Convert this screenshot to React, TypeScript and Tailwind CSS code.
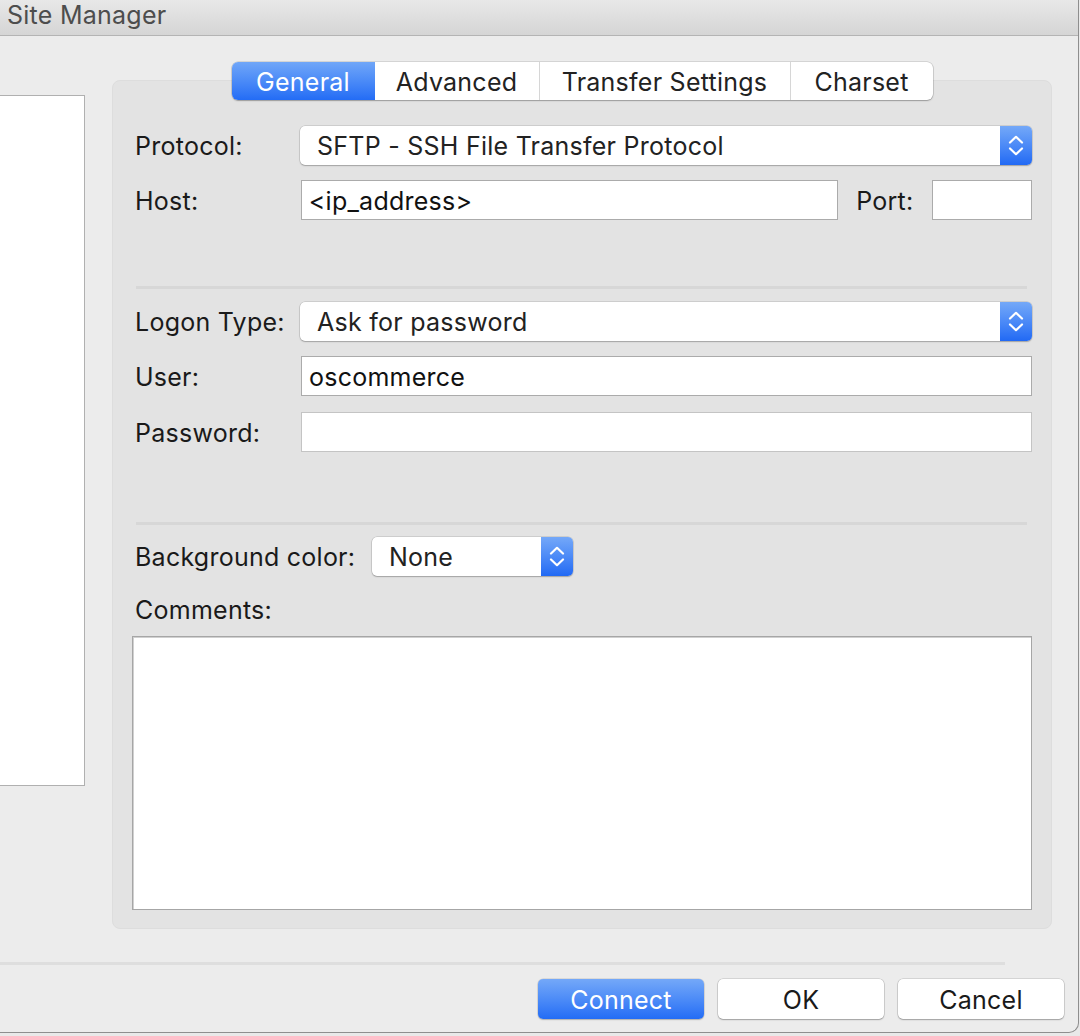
import React from "react";

const font = { fontFamily: '"Inter", "Liberation Sans", sans-serif' };

function Stepper() {
  return (
    <div className="flex h-full w-[32px] flex-col items-center justify-center gap-[3px] rounded-r-[5px] bg-gradient-to-b from-[#74a8f8] to-[#2169f4]">
      <svg width="16" height="9" viewBox="0 0 16 9" fill="none">
        <path d="M2 7.5 L8 1.8 L14 7.5" stroke="white" strokeWidth="2.2" strokeLinecap="round" strokeLinejoin="round" />
      </svg>
      <svg width="16" height="9" viewBox="0 0 16 9" fill="none">
        <path d="M2 1.5 L8 7.2 L14 1.5" stroke="white" strokeWidth="2.2" strokeLinecap="round" strokeLinejoin="round" />
      </svg>
    </div>
  );
}

function Select({ value, className }: { value: string; className: string }) {
  return (
    <div
      className={
        "flex h-[39px] items-stretch rounded-[5px] bg-white shadow-[0_0_0_0.5px_rgba(0,0,0,0.18),0_1px_1.5px_rgba(0,0,0,0.22)] " +
        className
      }
    >
      <div className="flex flex-1 items-center pl-[17px] pt-[2px] text-[25px] leading-none text-[#222]">{value}</div>
      <Stepper />
    </div>
  );
}

function Input({ value, className }: { value?: string; className: string }) {
  return (
    <div className={"flex h-[40px] items-center border border-[#ababab] bg-white pl-[7px] pt-[2px] text-[25px] leading-none text-[#111] " + className}>
      {value}
    </div>
  );
}

function Label({ children, className }: { children: React.ReactNode; className?: string }) {
  return <span className={"pt-[2px] text-[25px] leading-none text-[#1a1a1a] " + (className ?? "")}>{children}</span>;
}

function Sep() {
  return <div className="h-[3px] bg-[#d7d7d7] ml-[23px] mr-[24px]" />;
}

export default function App() {
  return (
    <div className="relative h-[1036px] w-[1080px] overflow-hidden bg-[#e9e9e9] tracking-[0.25px]" style={font}>
      <div className="flex h-[1033px] w-[1079px] flex-col overflow-hidden rounded-br-[10px] border-b border-r border-[#8e8e8e] bg-[#ececec]">
        {/* Title bar */}
        <div className="flex h-[36px] shrink-0 items-start border-b border-[#b4b4b4] bg-gradient-to-b from-[#e8e8e8] to-[#d5d5d5] pl-[7px]">
          <span className="mt-[-1px] text-[25px] leading-[32px] text-[#4d4d4d]">Site Manager</span>
        </div>

        {/* Body */}
        <div className="flex flex-1">
          {/* Left list */}
          <div className="mt-[59px] h-[691px] w-[85px] shrink-0 border border-l-0 border-[#b0b0b0] bg-white" />

          {/* Tab group */}
          <div className="ml-[27px] mt-[26px] flex w-[940px] flex-col">
            <div className="relative z-10 flex h-[38px] self-center rounded-[6px] bg-white text-[25px] leading-none text-[#222] shadow-[0_0_0_0.5px_rgba(0,0,0,0.2),0_1px_1.5px_rgba(0,0,0,0.25)]">
              <div className="flex w-[143px] items-center justify-center rounded-l-[6px] bg-gradient-to-b from-[#70a6f8] to-[#236cf5] pt-[2px] text-white">
                General
              </div>
              <div className="flex w-[165px] items-center justify-center border-r border-[#d6d6d6] pt-[2px]">Advanced</div>
              <div className="flex w-[251px] items-center justify-center border-r border-[#d6d6d6] pt-[2px]">Transfer Settings</div>
              <div className="flex w-[142px] items-center justify-center pt-[2px]">Charset</div>
            </div>

            <div className="mt-[-20px] flex h-[849px] flex-col rounded-[8px] border border-[#dddddd] bg-[#e3e3e3] pt-[45px]">
              {/* Protocol */}
              <div className="flex h-[39px] items-center pl-[22px] pr-[19px]">
                <Label className="w-[165px]">Protocol:</Label>
                <Select value="SFTP - SSH File Transfer Protocol" className="flex-1" />
              </div>
              {/* Host */}
              <div className="mt-[15px] flex h-[40px] items-center pl-[22px] pr-[19px]">
                <Label className="w-[166px]">Host:</Label>
                <Input value="<ip_address>" className="w-[538px]" />
                <Label className="ml-[18px] w-[76px]">Port:</Label>
                <Input className="w-[100px]" />
              </div>

              <div className="mt-[66px]">
                <Sep />
              </div>

              {/* Logon Type */}
              <div className="mt-[13px] flex h-[39px] items-center pl-[22px] pr-[19px]">
                <Label className="w-[165px]">Logon Type:</Label>
                <Select value="Ask for password" className="flex-1" />
              </div>
              <div className="mt-[15px] flex h-[40px] items-center pl-[22px] pr-[19px]">
                <Label className="w-[166px]">User:</Label>
                <Input value="oscommerce" className="flex-1" />
              </div>
              <div className="mt-[16px] flex h-[40px] items-center pl-[22px] pr-[19px]">
                <Label className="w-[166px]">Password:</Label>
                <Input className="flex-1 border-[#c4c4c4]" />
              </div>

              <div className="mt-[70px]">
                <Sep />
              </div>

              {/* Background color */}
              <div className="mt-[12px] flex h-[39px] items-center pl-[22px]">
                <Label className="w-[237px]">Background color:</Label>
                <Select value="None" className="w-[201px]" />
              </div>
              <div className="mt-[14px] flex h-[38px] items-center pl-[22px]">
                <Label>Comments:</Label>
              </div>
              <div className="ml-[19px] mr-[19px] mt-[8px] h-[274px] border border-[#a6a6a6] bg-white shadow-[inset_1px_1px_0_#d0d0d0]" />
            </div>
          </div>
        </div>

        {/* Bottom separator + buttons */}
        <div className="h-[3px] w-[1005px] bg-[#dedede]" />
        <div className="mt-[14px] flex h-[40px] justify-end gap-[14px] pr-[14px] text-[25px] leading-none">
          <div className="flex w-[166px] items-center justify-center rounded-[5px] bg-gradient-to-b from-[#74a8f8] to-[#236cf5] pt-[2px] text-white shadow-[0_0_0_0.5px_rgba(0,0,0,0.15),0_1px_1.5px_rgba(0,0,0,0.2)]">
            Connect
          </div>
          <div className="flex w-[166px] items-center justify-center rounded-[5px] bg-white pt-[2px] text-[#1a1a1a] shadow-[0_0_0_0.5px_rgba(0,0,0,0.2),0_1px_1.5px_rgba(0,0,0,0.25)]">
            OK
          </div>
          <div className="flex w-[166px] items-center justify-center rounded-[5px] bg-white pt-[2px] text-[#1a1a1a] shadow-[0_0_0_0.5px_rgba(0,0,0,0.2),0_1px_1.5px_rgba(0,0,0,0.25)]">
            Cancel
          </div>
        </div>
        <div className="h-[13px]" />
      </div>
    </div>
  );
}
